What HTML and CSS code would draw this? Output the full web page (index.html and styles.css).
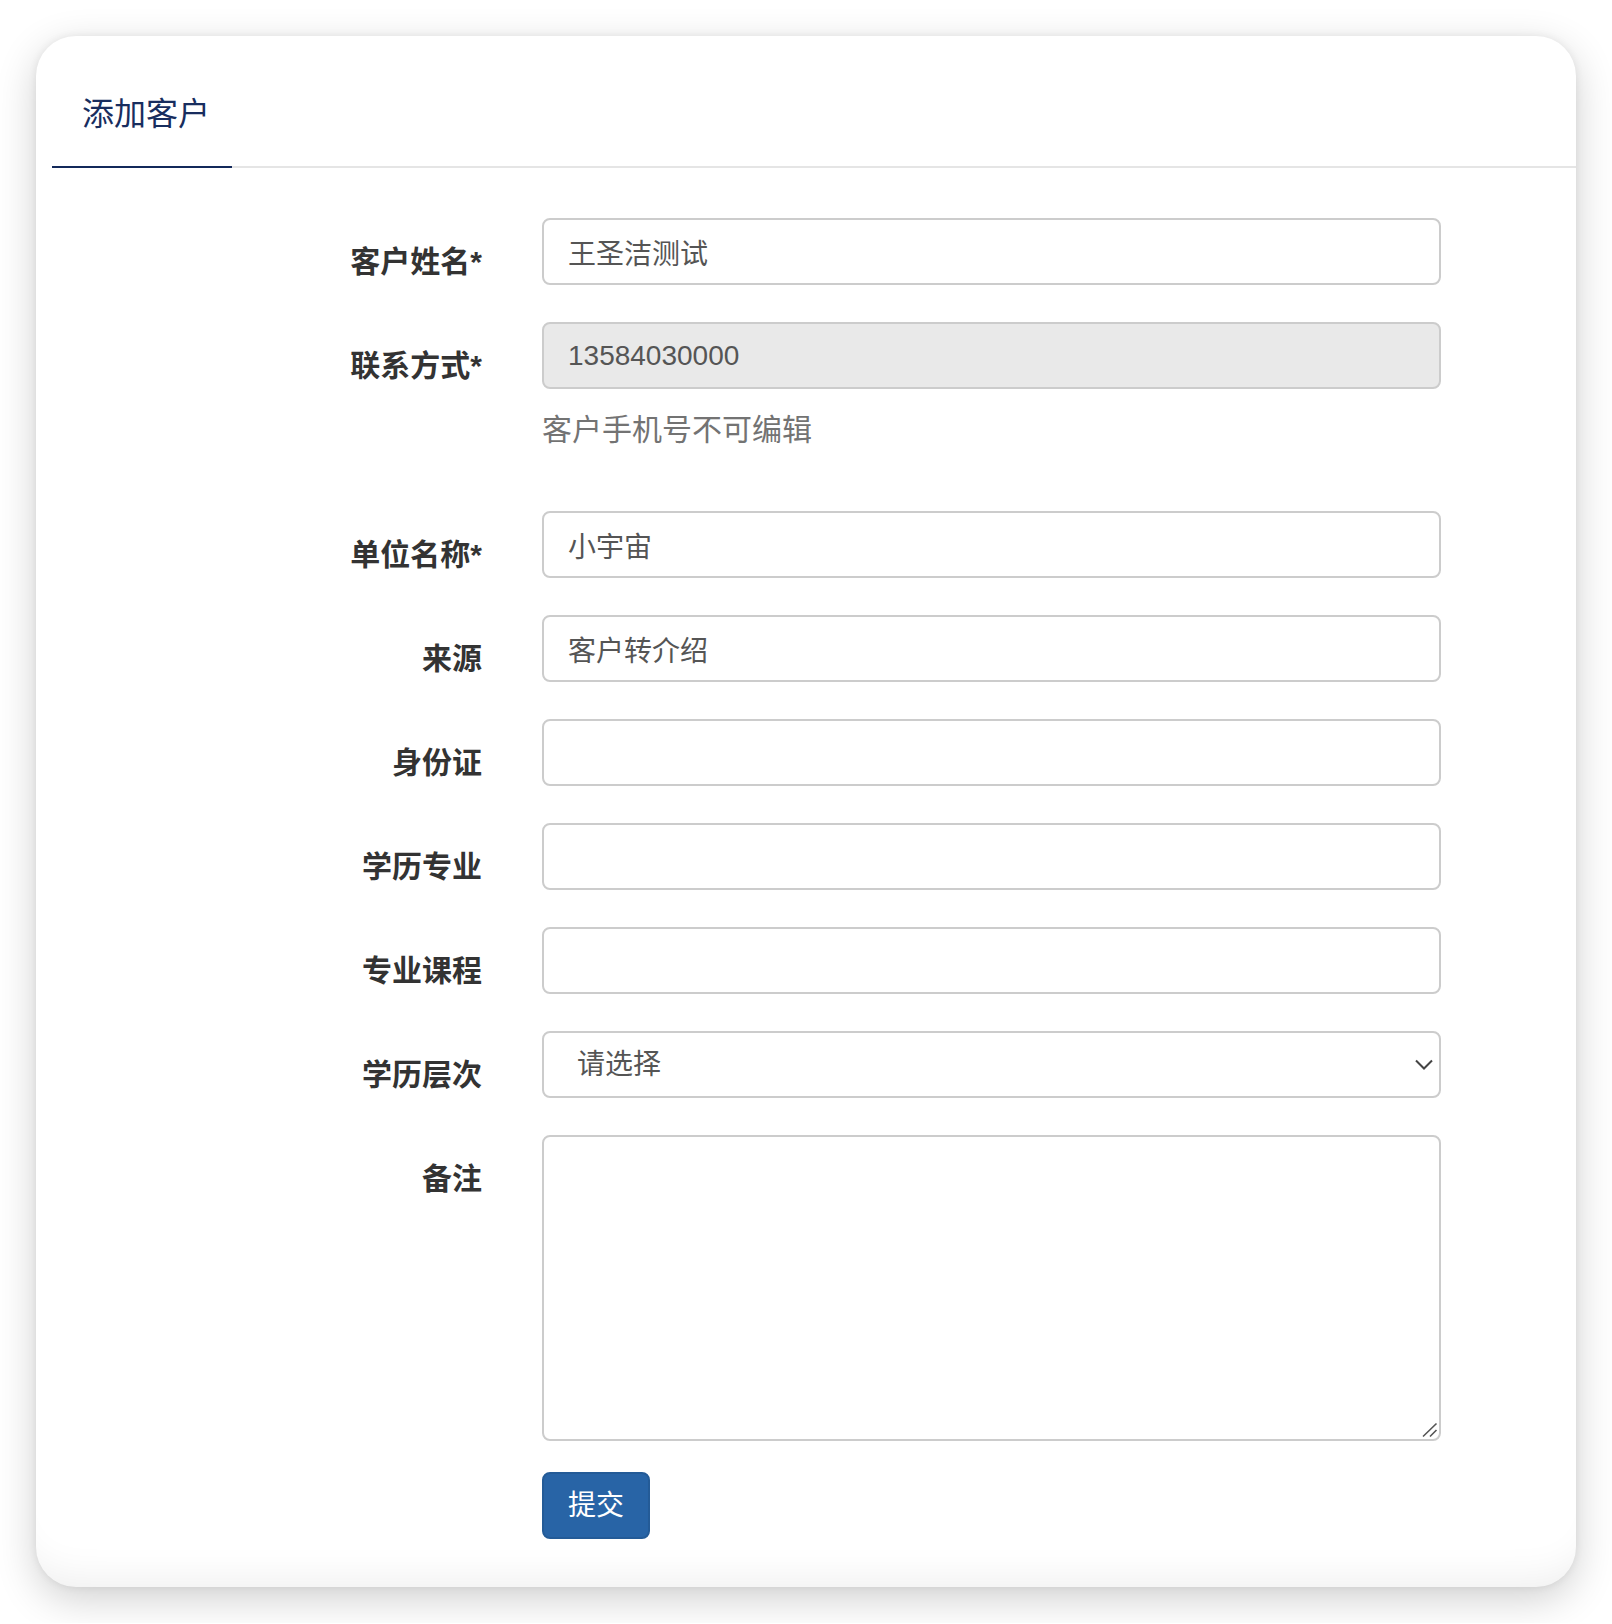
FILE: index.html
```html
<!DOCTYPE html>
<html lang="zh-CN">
<head>
	<meta charset="UTF-8">
	<title>添加客户</title>
	<link rel="stylesheet" href="styles.css">
</head>
<body>
	<div class="card">
		<ul class="tabs">
			<li class="active">添加客户</li>
		</ul>
		<form class="form">
			<div class="row">
				<label class="label">客户姓名*</label>
				<div class="field"><input class="input" type="text" value="王圣洁测试"></div>
			</div>
			<div class="row">
				<label class="label">联系方式*</label>
				<div class="field">
					<input class="input" type="text" value="13584030000" disabled>
					<p class="help">客户手机号不可编辑</p>
				</div>
			</div>
			<div class="row">
				<label class="label">单位名称*</label>
				<div class="field"><input class="input" type="text" value="小宇宙"></div>
			</div>
			<div class="row">
				<label class="label">来源</label>
				<div class="field"><input class="input" type="text" value="客户转介绍"></div>
			</div>
			<div class="row">
				<label class="label">身份证</label>
				<div class="field"><input class="input" type="text"></div>
			</div>
			<div class="row">
				<label class="label">学历专业</label>
				<div class="field"><input class="input" type="text"></div>
			</div>
			<div class="row">
				<label class="label">专业课程</label>
				<div class="field"><input class="input" type="text"></div>
			</div>
			<div class="row">
				<label class="label">学历层次</label>
				<div class="field select-wrap">
					<select class="input select">
						<option>请选择</option>
					</select>
					<svg class="chevron" width="18" height="11" viewBox="0 0 18 11"><path d="M1 1.5 L9 9.5 L17 1.5" fill="none" stroke="#444" stroke-width="2"/></svg>
				</div>
			</div>
			<div class="row row-note">
				<label class="label">备注</label>
				<div class="field note-wrap">
					<textarea class="input note"></textarea>
					<svg class="grip" width="16" height="16" viewBox="0 0 16 16"><path d="M1 14.5 L14.5 1.5 M8 14.5 L14.5 8" fill="none" stroke="#555" stroke-width="1.6"/></svg>
				</div>
			</div>
			<div class="row row-last">
				<span class="label"></span>
				<div class="field"><button class="btn" type="button">提交</button></div>
			</div>
		</form>
	</div>
</body>
</html>
```

FILE: styles.css
```css
body{
	margin: 0;
	background-color: #fff;
	font-family: "Liberation Sans", "Noto Sans CJK SC", sans-serif;
	color: #333;
}
.card{
	margin: 36px;
	padding-bottom: 48px;
	background-color: #fff;
	border-radius: 40px;
	box-shadow: 0 12px 40px rgba(0,0,0,0.19), 0 0 8px rgba(0,0,0,0.07), inset 0 -40px 40px -34px rgba(0,0,0,0.07);
}
.tabs{
	list-style: none;
	margin: 0 0 0 16px;
	padding: 58px 0 0;
	display: flex;
	border-bottom: 2px solid #e5e5e5;
}
.tabs li{
	padding: 0 22px 32px 30px;
	font-size: 32px;
	line-height: 40px;
	color: #182d5e;
	margin-bottom: -2px;
}
.tabs li.active{
	border-bottom: 2px solid #13295a;
}
.form{
	padding-top: 50px;
}
.row{
	display: flex;
	margin-bottom: 37px;
}
.row-note{
	margin-bottom: 31px;
}
.row-last{
	margin-bottom: 0;
}
.label{
	flex: none;
	width: 446px;
	box-sizing: border-box;
	padding-top: 24px;
	text-align: right;
	font-size: 30px;
	line-height: 40px;
	font-weight: bold;
	color: #333;
}
.field{
	width: 899px;
	margin-left: 60px;
	position: relative;
}
.input{
	display: block;
	width: 100%;
	height: 67px;
	box-sizing: border-box;
	padding: 12px 24px;
	border: 2px solid #ccc;
	border-radius: 8px;
	background-color: #fff;
	font-family: inherit;
	font-size: 28px;
	line-height: 40px;
	color: #555;
	outline: none;
}
.input:disabled{
	background-color: #e9e9e9;
	color: #555;
	-webkit-text-fill-color: #555;
	opacity: 1;
}
.help{
	margin: 21px 0 24px;
	font-size: 30px;
	line-height: 40px;
	color: #737373;
}
.select{
	appearance: none;
	-webkit-appearance: none;
	padding-left: 33px;
}
.chevron{
	position: absolute;
	right: 8px;
	top: 28px;
}
.note{
	height: 306px;
	resize: none;
}
.grip{
	position: absolute;
	right: 3px;
	bottom: 3px;
}
.btn{
	height: 67px;
	padding: 0 24px;
	border: 2px solid #245b97;
	border-radius: 8px;
	background-color: #2864a6;
	color: #fff;
	font-family: inherit;
	font-size: 28px;
	line-height: 40px;
	cursor: pointer;
}
```
